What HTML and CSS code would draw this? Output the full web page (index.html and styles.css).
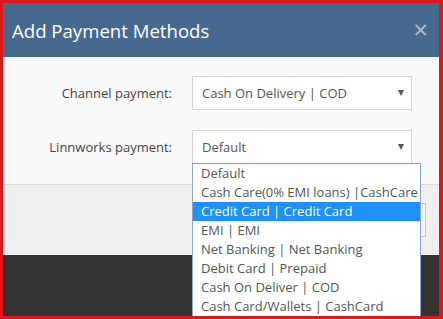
FILE: index.html
```html
<!DOCTYPE html>
<html>
<head>
<meta charset="utf-8">
<link rel="stylesheet" href="styles.css">
</head>
<body>
<div class="frame">
  <div class="modal">
    <div class="modal-header">
      <h1 class="title">Add Payment Methods</h1>
      <span class="close">&times;</span>
    </div>
    <div class="modal-body">
      <div class="row">
        <label class="label">Channel payment:</label>
        <div class="select">
          <span>Cash On Delivery | COD</span>
          <span class="arrow"></span>
        </div>
      </div>
      <div class="row row2">
        <label class="label">Linnworks payment:</label>
        <div class="select-wrap">
          <div class="select">
            <span>Default</span>
            <span class="arrow"></span>
          </div>
          <ul class="dropdown">
            <li>Default</li>
            <li>Cash Care(0% EMI loans) |CashCare</li>
            <li class="active">Credit Card | Credit Card</li>
            <li>EMI | EMI</li>
            <li>Net Banking | Net Banking</li>
            <li>Debit Card | Prepaid</li>
            <li>Cash On Deliver | COD</li>
            <li>Cash Card/Wallets | CashCard</li>
          </ul>
        </div>
      </div>
    </div>
    <div class="modal-footer">
      <button class="btn">Add</button>
    </div>
  </div>
  <div class="backdrop"></div>
</div>
</body>
</html>
```
FILE: styles.css
```css
html, body {
  margin: 0;
  padding: 0;
}
body {
  width: 443px;
  height: 319px;
  background: #e0161b;
  overflow: hidden;
  font-family: "Open Sans", "Liberation Sans", sans-serif;
}
.frame {
  margin: 3px 4px 3px 3px;
  height: 313px;
  display: flex;
  flex-direction: column;
}
.modal {
  background: #f9f9f9;
  display: flex;
  flex-direction: column;
}
.modal-header {
  background: #46698e;
  height: 54px;
  display: flex;
  align-items: center;
  justify-content: space-between;
  padding: 0 11px 0 9px;
}
.title {
  margin: 0;
  color: #fff;
  font-weight: 400;
  font-size: 18.6px;
}
.close {
  color: #aebfd1;
  font-size: 26px;
  line-height: 1;
  margin-top: -2px;
}
.modal-body {
  height: 127px;
  box-sizing: border-box;
  padding-top: 19px;
  background: #fafafa;
}
.row {
  display: flex;
  align-items: center;
  height: 34px;
}
.row2 {
  margin-top: 20px;
}
.label {
  width: 189px;
  text-align: right;
  font-size: 13px;
  color: #444;
  padding-right: 20px;
  box-sizing: border-box;
}
.select-wrap {
  position: relative;
}
.select {
  width: 220px;
  height: 34px;
  box-sizing: border-box;
  border: 1px solid #d6d6d6;
  background: #fff;
  display: flex;
  align-items: center;
  justify-content: space-between;
  padding: 0 7px 0 9px;
  font-size: 13px;
  color: #555;
}
.arrow {
  width: 0;
  height: 0;
  border-left: 3.5px solid transparent;
  border-right: 3.5px solid transparent;
  border-top: 6px solid #555;
}
.dropdown {
  position: absolute;
  left: 0;
  top: 33px;
  width: 229px;
  margin: 0;
  padding: 0;
  list-style: none;
  background: #fff;
  border: 1px solid #8aa4c8;
  border-bottom: none;
  box-sizing: border-box;
  z-index: 2;
}
.dropdown li {
  height: 19px;
  line-height: 19px;
  padding-left: 8px;
  font-size: 13px;
  color: #555;
  white-space: nowrap;
}
.dropdown li.active {
  background: #1e90ff;
  color: #fff;
}
.modal-footer {
  height: 71px;
  box-sizing: border-box;
  border-top: 1px solid #dcdcdc;
  background: #efefef;
  display: flex;
  justify-content: flex-end;
  padding: 18px 13px 0 0;
}
.btn {
  width: 80px;
  height: 34px;
  border: 1px solid #c8c8c8;
  background: #f4f4f4;
  font-family: inherit;
  font-size: 13px;
  color: #333;
}
.backdrop {
  flex: 1;
  background: #333333;
}
```
